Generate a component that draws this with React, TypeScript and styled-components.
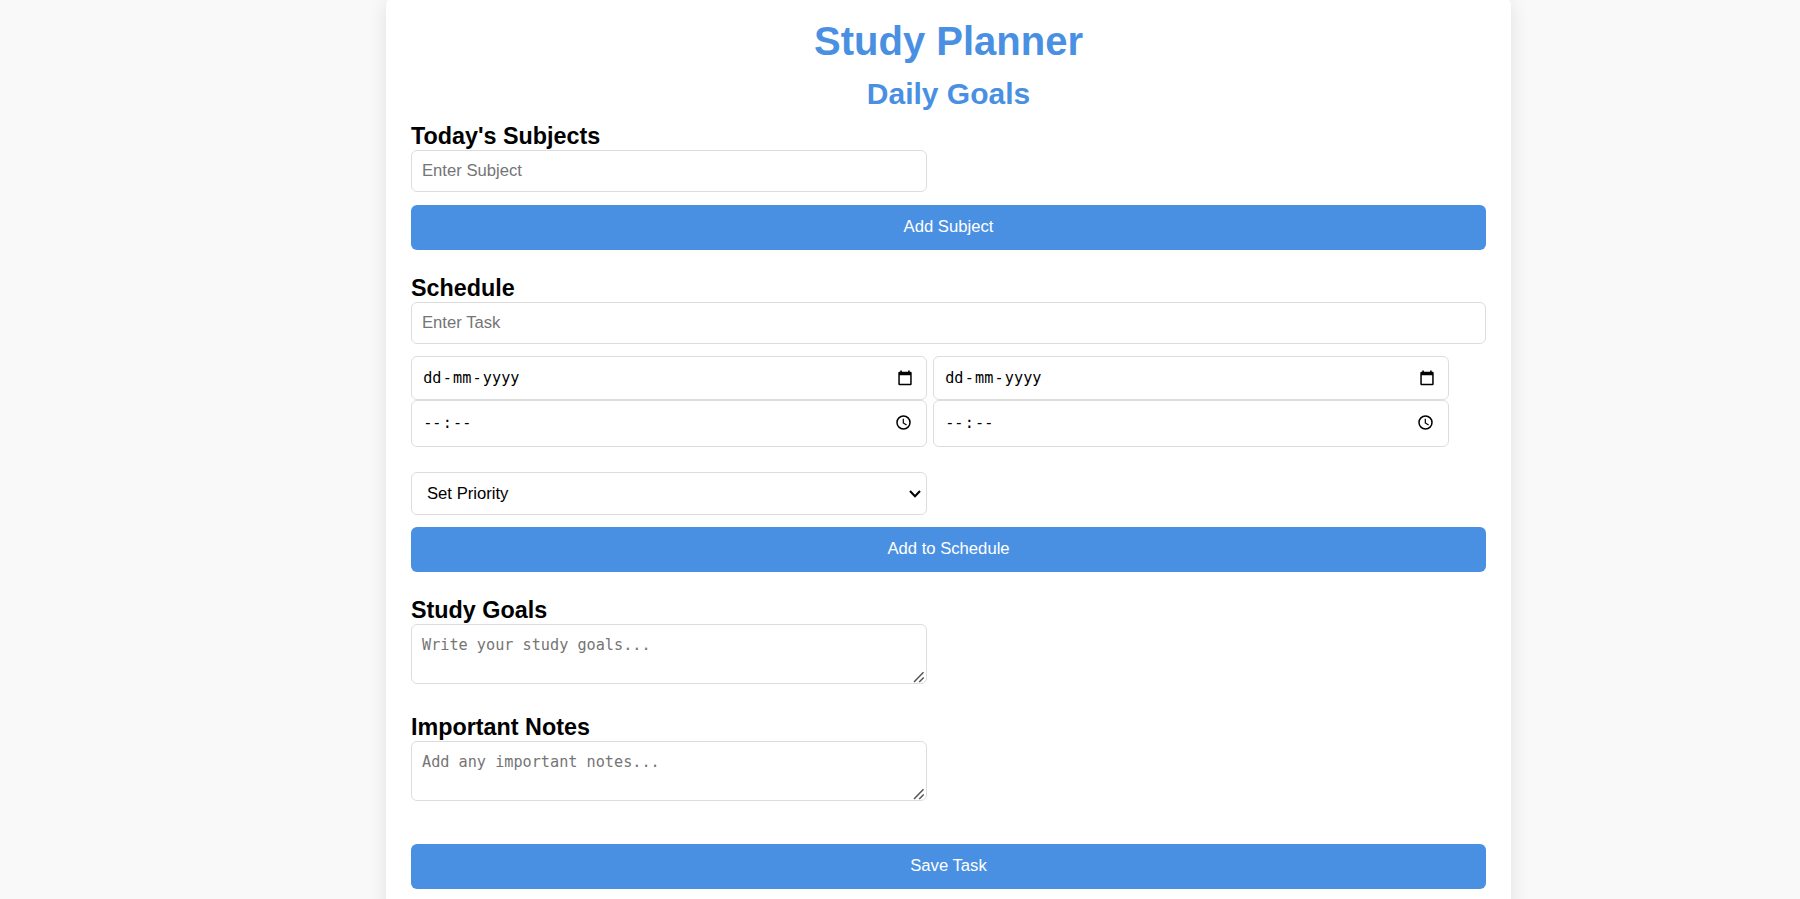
import React from "react";
import styled, { createGlobalStyle } from "styled-components";

const GlobalStyle = createGlobalStyle`
  * { box-sizing: border-box; }
  html { overflow: hidden; }
  body {
    margin: 0;
    height: 899px;
    overflow: hidden;
    background: #f9f9f9;
    color: #000;
    font-family: "Liberation Sans", Arial, sans-serif;
    font-size: 16.67px;
  }
`;

const Planner = styled.main`
  width: 1125px;
  height: 940px;
  margin: -4px 0 0 386px;
  padding: 21px 25px 0;
  background: #fff;
  border-radius: 10px;
  box-shadow: 0 4px 20px rgba(0, 0, 0, 0.1);
  display: flex;
  flex-direction: column;
`;

const Title = styled.h1`
  margin: 0;
  height: 48px;
  line-height: 48px;
  font-size: 40px;
  text-align: center;
  color: #4a90e2;
`;

const Subtitle = styled.h2`
  margin: 9px 0 0;
  height: 36px;
  line-height: 39px;
  font-size: 30px;
  text-align: center;
  color: #4a90e2;
`;

const Section = styled.section<{ $gap: number }>`
  margin-top: ${(p) => p.$gap}px;
  display: flex;
  flex-direction: column;
  align-items: flex-start;
`;

const SectionTitle = styled.h3`
  margin: 0;
  height: 28px;
  line-height: 28px;
  font-size: 23.33px;
`;

const TextInput = styled.input<{ $full?: boolean }>`
  width: ${(p) => (p.$full ? "100%" : "516px")};
  height: 42px;
  padding: 0 10px;
  border: 1px solid #ddd;
  border-radius: 6px;
  background: #fff;
  font: 16.67px "Liberation Sans", Arial, sans-serif;
  &::placeholder { color: #757575; }
`;

const Button = styled.button`
  width: 100%;
  height: 45px;
  margin: 0;
  padding: 0 0 1px;
  border: 0;
  border-radius: 6px;
  background: #4a90e2;
  color: #fff;
  font: 16.67px "Liberation Sans", Arial, sans-serif;
  cursor: pointer;
`;

const Gap = styled.div<{ $size: number }>`
  height: ${(p) => p.$size}px;
`;

const FieldRow = styled.div`
  display: flex;
  gap: 6px;
`;

const PickerField = styled.div<{ $height: number; $right: number; $bottom: number }>`
  width: 516px;
  height: ${(p) => p.$height}px;
  padding: 0 ${(p) => p.$right}px ${(p) => p.$bottom}px 10px;
  border: 1px solid #ddd;
  border-radius: 6px;
  display: flex;
  align-items: center;
  justify-content: space-between;
  font: 15.2px "DejaVu Sans Mono", "Liberation Mono", monospace;
`;

const Segments = styled.div`
  display: flex;
  span { padding: 0 1.2px; }
`;

const ControlWrap = styled.div`
  position: relative;
  width: 516px;
`;

const PrioritySelect = styled.select`
  appearance: none;
  display: block;
  width: 100%;
  height: 43px;
  padding: 0 30px 0 15px;
  border: 1px solid #ddd;
  border-radius: 6px;
  background: #fff;
  color: #000;
  font: 16.67px "Liberation Sans", Arial, sans-serif;
`;

const Chevron = styled.svg`
  position: absolute;
  right: 5px;
  top: 17px;
  pointer-events: none;
`;

const Grip = styled.svg`
  position: absolute;
  right: 2px;
  bottom: 1px;
  pointer-events: none;
`;

const NoteArea = styled.textarea`
  display: block;
  width: 100%;
  height: 60px;
  padding: 11px 10px 9px;
  border: 1px solid #ddd;
  border-radius: 6px;
  background: #fff;
  resize: none;
  font: 15.2px/19px "DejaVu Sans Mono", "Liberation Mono", monospace;
  &::placeholder { color: #757575; }
`;

const CalendarIcon = () => (
  <svg width="14" height="16" viewBox="0 0 14 16">
    <path fillRule="evenodd" d="M1.5 1.8H2.3V.4H3.9V1.8H10.1V.4H11.7V1.8H12.5Q13.7 1.8 13.7 3V14Q13.7 15.2 12.5 15.2H1.5Q.3 15.2 .3 14V3Q.3 1.8 1.5 1.8ZM1.8 5.2V13.7H12.2V5.2Z" />
  </svg>
);

const ClockIcon = () => (
  <svg width="15" height="15" viewBox="0 0 15 15" fill="none" stroke="#000">
    <circle cx="7.5" cy="7.5" r="6.5" strokeWidth="1.5" />
    <path d="M7.3 3.7V7.9L10.6 9.9" strokeWidth="1.2" />
  </svg>
);

const DateField = () => (
  <PickerField $height={44} $right={14} $bottom={1}>
    <Segments><span>dd</span>-<span>mm</span>-<span>yyyy</span></Segments>
    <CalendarIcon />
  </PickerField>
);

const TimeField = () => (
  <PickerField $height={47} $right={15} $bottom={2}>
    <Segments><span>--</span>:<span>--</span></Segments>
    <ClockIcon />
  </PickerField>
);

const Note = ({ placeholder }: { placeholder: string }) => (
  <ControlWrap>
    <NoteArea placeholder={placeholder} />
    <Grip width="12" height="12" viewBox="0 0 12 12" fill="none" stroke="#555" strokeWidth="1.5">
      <path d="M1 11L10.5 1.3M6.2 11L10.7 6.4" />
    </Grip>
  </ControlWrap>
);

export default function App() {
  return (
    <>
      <GlobalStyle />
      <Planner>
        <Title>Study Planner</Title>
        <Subtitle>Daily Goals</Subtitle>
        <Section $gap={12}>
          <SectionTitle>Today's Subjects</SectionTitle>
          <TextInput placeholder="Enter Subject" />
          <Gap $size={13} />
          <Button>Add Subject</Button>
        </Section>
        <Section $gap={24}>
          <SectionTitle>Schedule</SectionTitle>
          <TextInput $full placeholder="Enter Task" />
          <Gap $size={12} />
          <FieldRow><DateField /><DateField /></FieldRow>
          <FieldRow><TimeField /><TimeField /></FieldRow>
          <Gap $size={25} />
          <ControlWrap>
            <PrioritySelect defaultValue="">
              <option value="">Set Priority</option>
              <option>High</option>
              <option>Medium</option>
              <option>Low</option>
            </PrioritySelect>
            <Chevron width="14" height="10" viewBox="0 0 14 10" fill="none" stroke="#000" strokeWidth="2.1">
              <path d="M2 2L7 7.2L12 2" />
            </Chevron>
          </ControlWrap>
          <Gap $size={12} />
          <Button>Add to Schedule</Button>
        </Section>
        <Section $gap={24}>
          <SectionTitle>Study Goals</SectionTitle>
          <Note placeholder="Write your study goals..." />
        </Section>
        <Section $gap={29}>
          <SectionTitle>Important Notes</SectionTitle>
          <Note placeholder="Add any important notes..." />
          <Gap $size={43} />
          <Button>Save Task</Button>
        </Section>
      </Planner>
    </>
  );
}
